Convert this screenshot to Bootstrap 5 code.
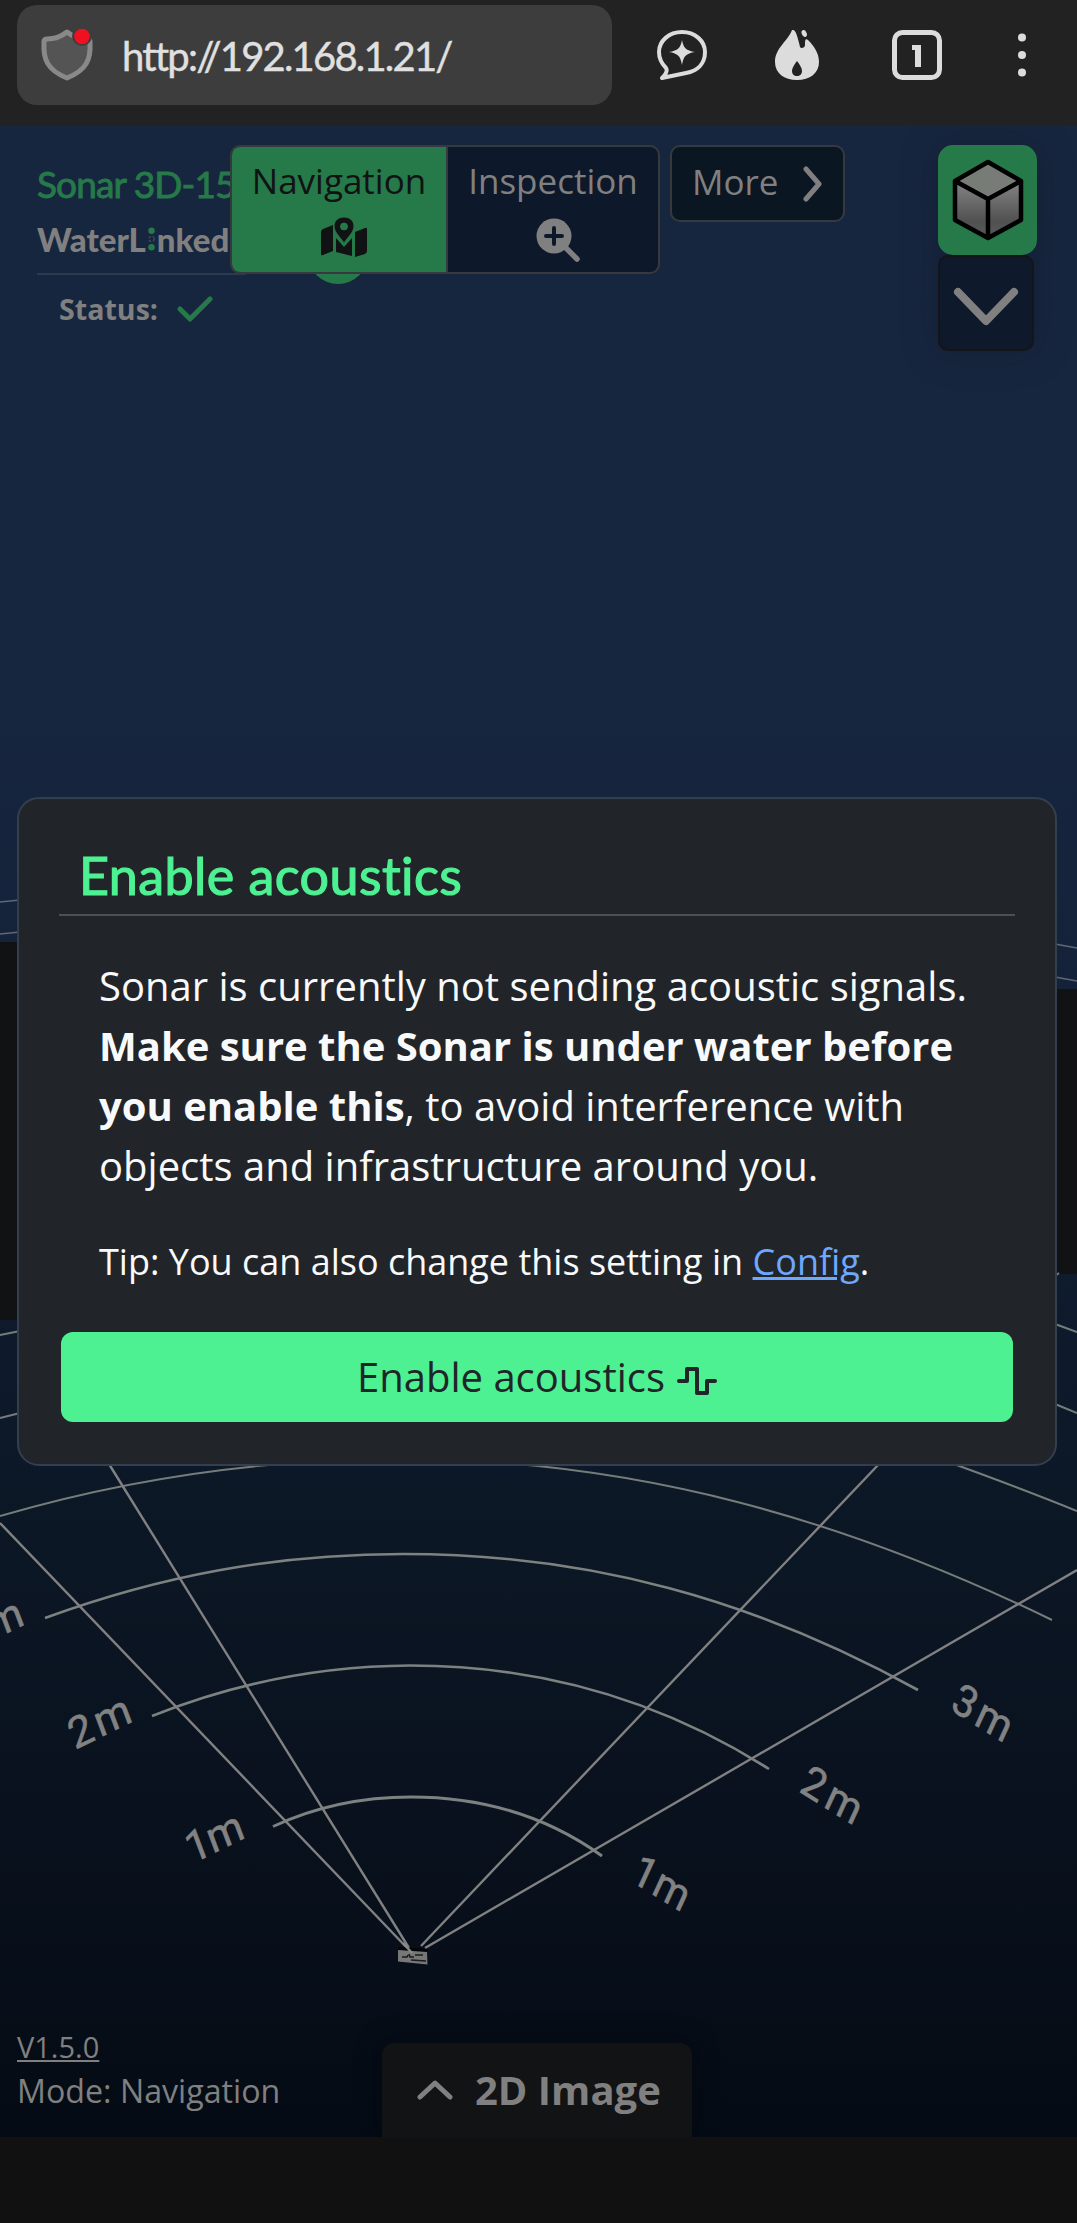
<!DOCTYPE html>
<html lang="en">
<head>
<meta charset="utf-8">
<meta name="viewport" content="width=device-width, initial-scale=1">
<title>Sonar 3D-15</title>
<link rel="stylesheet" href="https://cdn.jsdelivr.net/npm/bootstrap@5.3.0/dist/css/bootstrap.min.css">
<script src="https://cdn.jsdelivr.net/npm/bootstrap@5.3.0/dist/js/bootstrap.bundle.min.js"></script>
<style>
body{font-family:"Open Sans","Noto Sans",sans-serif;background:#111;color:#808080;height:2223px;overflow:hidden}
svg{display:block;flex:none}
.browser-bar{height:125px;background:#222;padding:5px 0 20px 17px}
.url-box{width:595px;height:100px;border-radius:20px;background:#3d3d3d;padding-left:23px}
.url-text{font:400 40px/60px Lato,sans-serif;color:#e0e0e0;margin-left:28px;letter-spacing:-1.8px;-webkit-text-stroke:.4px #e0e0e0;padding-top:2px}
.browser-icons{margin-left:45px}
.flame-icon{margin-left:68px}
.tabs-icon{margin-left:73px}
.dots-icon{margin-left:70px}
.viewer{height:2012px;background:linear-gradient(#17263f 0,#17263f 28%,#14233a 41%,#0e1a2c 60%,#0c1725 70%,#0a121f 82%,#040b14 100%);overflow:hidden}
.scene{inset:0}
.top-tools{padding:20px 40px 0 37px}
.brand{width:193px;white-space:nowrap;padding-top:16px}
.brand-name{font:400 37px/46px Lato,sans-serif;color:#267949;-webkit-text-stroke:.9px #267949;letter-spacing:-.9px}
.maker{font:900 33px/40px Lato,sans-serif;margin-top:12px;height:40px}
.brand-line{width:209px;height:2px;background:#2d3a4e;margin-top:14px}
.status-row{font-weight:700;font-size:28.6px;line-height:40px;padding-left:22px;margin-top:14px;gap:19px}
.mode-group{width:430px;height:129px;border:2px solid #38393e;border-radius:10px;overflow:hidden;z-index:1;background:#0d182a}
.mode-btn{flex:1;font-size:35px;line-height:48px;padding:10px 0 0;border-radius:0;color:#808080;border:0}
.mode-btn.on{background:#267949;color:#101214;border-right:2px solid #38393e;flex:0 0 216px}
.mode-btn svg{margin:12px 0 0 10px}
.more-btn{width:175px;height:77px;margin-left:10px;border:2px solid #38393e;border-radius:10px;background:#0b1623;color:#808080;font-size:35px;line-height:48px;padding:0 20px 3px 20px}
.more-btn svg{margin-top:3px}
.view-stack{width:99px;filter:drop-shadow(0 0 18px rgba(5,12,25,.3))}
.cube-btn{height:110px;border-radius:15px;background:#267949}
.down-btn{width:96px;height:96px;border:2px solid #131519;border-radius:10px;background:#0e192b;padding-top:8px}
.acoustics{left:17px;top:672px;width:1040px;height:669px;border:2px solid #333f4d;border-radius:22px;background:#212529;color:#f8f9fa;padding:40px 40px 42px;z-index:3}
.acoustics h1{font:400 52px/66px Lato,sans-serif;color:#4df192;-webkit-text-stroke:1.2px #4df192;letter-spacing:.45px;margin:0;padding:3px 0 8px 20px;height:77px;border-bottom:2px solid #495057}
.acoustics .copy{padding:40px 0 0 40px;font-size:40px;line-height:60px;flex:1;white-space:nowrap}
.acoustics .tip{font-size:36px;line-height:54px;margin-top:39px}
.acoustics .tip a{color:#6ea8fe}
.enable-btn{height:90px;margin:0 2px;border-radius:12px;background:#4df192;color:#212529;border:0;font-size:40px;padding:0;gap:12px}
.enable-btn svg{margin-top:7px}
.bottom-tools{left:0;right:0;bottom:0}
.meta-info{left:17px;bottom:24px;line-height:44px;font-size:32.2px}
.meta-info a{color:#808080;font-size:29px}
.image-tab{width:310px;height:94px;margin-left:382px;background:#121314;border-radius:12px 12px 0 0;font-size:40px;font-weight:700;color:#808080;gap:22px;padding-left:35px;box-shadow:0 0 24px rgba(5,5,15,.5)}
.scale-label{font:400 43px Roboto,sans-serif;fill:#828282;stroke:#828282;stroke-width:.6}
</style>
</head>
<body>
<header class="browser-bar d-flex">
  <div class="url-box d-flex align-items-center">
    <svg width="54" height="54" viewBox="40 28 54 54"><path d="M67 32c5 4 10 7 20 7 2 0 3 1 3 3 1 17-3 28-23 36-20-8-24-19-23-36 0-2 1-3 3-3 10 0 15-3 20-7z" fill="#545454" stroke="#898989" stroke-width="5" stroke-linejoin="round"/><circle cx="82" cy="36" r="10" fill="#3d3d3d"/><circle cx="82" cy="36.500" r="7.800" fill="#f01022"/></svg>
    <span class="url-text">http://192.168.1.21/</span>
  </div>
  <div class="browser-icons d-flex align-items-center">
    <svg width="50" height="50" viewBox="657 30 50 50"><path d="M659 52c0-11 10-20 23-20s23 9 23 20c0 12-8 19-19 21l-24 5c4-4 6-7 4-10-4-4-7-9-7-16z" fill="none" stroke="#dcdcdc" stroke-width="4" stroke-linejoin="round"/><path d="M682 40c1.500 8 4 10.500 13 12-9 1.500-11.500 4-13 13-1.500-9-4-11.500-13-13 9-1.500 11.500-4 13-12z" fill="#dcdcdc"/></svg>
    <svg class="flame-icon" width="44" height="50" viewBox="775 30 44 50"><path d="M792 30c2-.5 3 1 4 3 2 5 3 10 4 14 1 2 5 1 5-2 0-4 0-7 3-5 6 6 11 13 11 22 0 11-9 18-22 18s-22-7-22-18c0-14 13-21 17-32zM797 61c-3 4-5 7-5 10s2 5 5 5 5-2 5-5-2-6-5-10z" fill="#dcdcdc" fill-rule="evenodd"/><ellipse cx="804" cy="33.500" rx="2.400" ry="3.600" transform="rotate(-25 804 33)" fill="#dcdcdc"/></svg>
    <svg class="tabs-icon" width="50" height="50" viewBox="0 0 50 50"><rect x="2.500" y="2.500" width="45" height="45" rx="8" fill="none" stroke="#dcdcdc" stroke-width="5"/><path d="M20 15h9v22h-6V20h-3z" fill="#dcdcdc"/></svg>
    <svg class="dots-icon" width="20" height="50" viewBox="0 0 20 50"><g fill="#dcdcdc"><circle cx="10" cy="7.500" r="4"/><circle cx="10" cy="25" r="4"/><circle cx="10" cy="42.500" r="4"/></g></svg>
  </div>
</header>

<main class="viewer position-relative">
  <svg class="scene position-absolute" width="1077" height="2012" viewBox="0 125 1077 2012">
    <rect x="0" y="942" width="20" height="378" fill="#111213"/>
    <rect x="1055" y="989" width="22" height="285" fill="#111213"/>
    <circle cx="338" cy="254" r="30" fill="#267949"/>
    <g fill="none" stroke="#5d6974" stroke-width="1.600">
      <path d="M0 902 20 900M0 934 20 932M1055 944l22 4M1055 977l22 4"/>
    </g>
    <g fill="none" stroke="#757c7a" stroke-width="2">
      <path d="M0 1335 20 1331M0 1418 20 1413M1055 1324 1077 1332M1055 1404 1077 1413M1055 1276l4-3"/>
      <path d="M940 1459C990 1477 1035 1494 1077 1511"/>
      <path d="M0 1516C130 1478 260 1459 400 1459C640 1459 850 1522 1052 1620"/>
    </g>
    <g fill="none" stroke="#7c8280" stroke-width="2.600">
      <path d="M45 1618C160 1576 275 1554 403 1554C590 1554 755 1600 918 1690"/>
      <path d="M152 1716C237 1682 320 1666 410 1665.500C540 1665.500 660 1700 769 1769"/>
      <path d="M273 1826.500C315 1807 360 1797 411 1797C480 1797 545 1815 602 1856" stroke-width="3"/>
    </g>
    <g stroke="#818181" stroke-width="2.400">
      <path d="M0 1523 410 1951M109 1464 409 1948M879 1464 421 1946M1077 1570 425 1948"/>
    </g>
    <path d="M398 1947l30 2-1 4-29-3z" fill="#030508"/>
    <path d="M398 1950l29 2 .5 12.500-29.500-3z" fill="#777"/>
    <path d="M402 1957h5l1-2M409 1954l1 3h4M415 1955h8M411 1960l15 1" stroke="#191b20" stroke-width="1.600" fill="none"/>
    <path d="M403 1943l9 10" stroke="#8a8a8a" stroke-width="2.400"/>
    <text class="scale-label" transform="matrix(.9 -.44 .35 .93 -33 1653)">3<tspan dx="4">m</tspan></text>
    <text class="scale-label" transform="matrix(.9 -.44 .35 .93 75 1750)">2<tspan dx="4">m</tspan></text>
    <text class="scale-label" transform="matrix(.9 -.44 .35 .93 192 1864)">1<tspan dx="-1">m</tspan></text>
    <text class="scale-label" transform="matrix(.84 .52 -.42 .91 629 1880)">1<tspan dx="1">m</tspan></text>
    <text class="scale-label" transform="matrix(.84 .52 -.42 .91 798 1791)">2<tspan dx="5">m</tspan></text>
    <text class="scale-label" transform="matrix(.84 .52 -.42 .91 949 1709)">3<tspan dx="4">m</tspan></text>
  </svg>

  <div class="top-tools position-relative d-flex align-items-start">
    <div class="brand">
      <div class="brand-name">Sonar 3D-15</div>
      <div class="maker d-flex align-items-center"><span>WaterL</span><svg width="11" height="28" viewBox="0 0 12 28"><circle cx="6" cy="5" r="3.500" fill="#267949"/><circle cx="6" cy="14" r="3" fill="none" stroke="#596273" stroke-dasharray="3 2"/><circle cx="6" cy="23" r="3.500" fill="#267949"/></svg><span>nked</span></div>
      <div class="brand-line"></div>
      <div class="status-row d-flex align-items-center"><span>Status:</span><svg width="36" height="26" viewBox="0 0 36 26"><path d="M3 13l10 10L33 3" fill="none" stroke="#267949" stroke-width="5" stroke-linecap="round" stroke-linejoin="round"/></svg></div>
    </div>
    <div class="mode-group d-flex position-relative">
      <button class="mode-btn on d-flex flex-column align-items-center"><span>Navigation</span>
        <svg width="46" height="40" viewBox="0 0 46 40"><path d="M0 15Q0 13 2 12l10-4v26L2 38q-2 1-2-1zM34 15l10-4q2-1 2 1v22q0 2-2 3l-10 3zM15 21l8 9 8-9v18l-16-4z" fill="#101214"/><path d="M23 0c6 0 10 4 10 9 0 6-6 11-10 17C19 20 13 15 13 9c0-5 4-9 10-9zm0 6a3.500 3.500 0 100 7 3.500 3.500 0 000-7z" fill="#101214" stroke="#267949" stroke-width="1" fill-rule="evenodd"/></svg>
      </button>
      <button class="mode-btn d-flex flex-column align-items-center bg-transparent"><span>Inspection</span>
        <svg width="46" height="46" viewBox="0 0 46 46"><circle cx="19" cy="19" r="17.500" fill="#808080"/><path d="M31 31l11 11" stroke="#808080" stroke-width="5.500" stroke-linecap="round"/><path d="M19 11v16M11 19h16" stroke="#0d182a" stroke-width="4" stroke-linecap="round"/></svg>
      </button>
    </div>
    <button class="more-btn d-flex align-items-center justify-content-between"><span>More</span>
      <svg width="20" height="36" viewBox="0 0 20 36"><path d="M3 3l13 15L3 33" fill="none" stroke="#808080" stroke-width="5" stroke-linecap="round" stroke-linejoin="round"/></svg>
    </button>
    <div class="view-stack ms-auto">
      <div class="cube-btn d-flex align-items-center justify-content-center">
        <svg width="72" height="82" viewBox="0 0 72 82"><defs><linearGradient id="face" x1="0" x2="0" y1="0" y2="1"><stop stop-color="#858585"/><stop offset=".7" stop-color="#515151"/><stop offset="1" stop-color="#595959"/></linearGradient></defs><path d="M36 3l33 19-33 18L3 22z" fill="#777c76"/><path d="M3 22l33 18v39L3 61zM69 22L36 40v39l33-18z" fill="url(#face)"/><path d="M36 3l33 19v39L36 79 3 61V22zM3 22l33 18 33-18M36 40v39" fill="none" stroke="#000" stroke-width="4.500" stroke-linejoin="round"/></svg>
      </div>
      <div class="down-btn d-flex align-items-center justify-content-center">
        <svg width="66" height="40" viewBox="0 0 66 40"><path d="M5 5l28 29L61 5" fill="none" stroke="#808080" stroke-width="8" stroke-linecap="round" stroke-linejoin="round"/></svg>
      </div>
    </div>
  </div>

  <section class="acoustics position-absolute d-flex flex-column">
    <h1>Enable acoustics</h1>
    <div class="copy">
      <p class="m-0">Sonar is currently not sending acoustic signals.<br><b>Make sure the Sonar is under water before<br>you enable this</b>, to avoid interference with<br>objects and infrastructure around you.</p>
      <p class="tip mb-0">Tip: You can also change this setting in <a href="#">Config</a>.</p>
    </div>
    <button class="enable-btn d-flex align-items-center justify-content-center"><span>Enable acoustics</span>
      <svg width="40" height="30" viewBox="0 0 40 30"><path d="M2 15h8V3h10v24h10V15h8" fill="none" stroke="#212529" stroke-width="4" stroke-linecap="round" stroke-linejoin="round"/></svg>
    </button>
  </section>

  <div class="bottom-tools position-absolute">
    <div class="meta-info position-absolute"><div><a href="#">V1.5.0</a></div><div>Mode: Navigation</div></div>
    <div class="image-tab d-flex align-items-center"><svg width="36" height="20" viewBox="0 0 36 20"><path d="M3 17L18 3l15 14" fill="none" stroke="#808080" stroke-width="5" stroke-linecap="round" stroke-linejoin="round"/></svg><span>2D Image</span></div>
  </div>
</main>
</body>
</html>
